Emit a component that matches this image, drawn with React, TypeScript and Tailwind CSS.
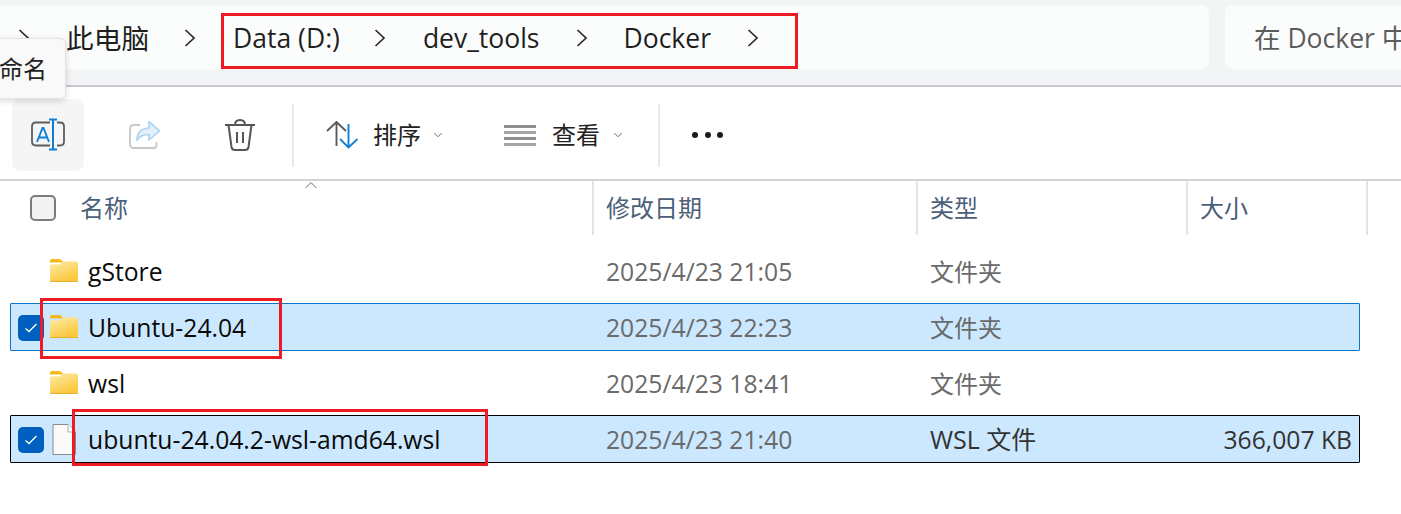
import { ChevronDown, ChevronUp } from 'lucide-react';

const font = { sans: 'font-["Open_Sans","Noto_Sans_CJK_SC",sans-serif]' };

function FolderIcon() {
  return (
    <svg width="28" height="23" viewBox="0 0 28 23" className="shrink-0">
      <defs>
        <linearGradient id="folderBody" x1="0" y1="0" x2="0.5" y2="1">
          <stop offset="0" stopColor="#fdeca8" />
          <stop offset="1" stopColor="#fcc83e" />
        </linearGradient>
      </defs>
      <path d="M0 2q0-2 2-2h7q1.500 0 2.500 1.200L14 3.500h-14z" fill="#f6b81c" />
      <path d="M0 5.500h0.500L10 5.200l3-2.700H26q2 0 2 2V21q0 2-2 2H2q-2 0-2-2z" fill="url(#folderBody)" />
      <path d="M0 22.500h28" stroke="#e8ad2c" strokeWidth="1" />
    </svg>
  );
}

function FileIcon() {
  return (
    <svg width="24" height="31" viewBox="0 0 24 31" className="shrink-0">
      <path d="M1 .5h15l7.500 7.500v22.500H1z" fill="#fafafa" stroke="#8a8a8a" />
      <path d="M16 .5V8h7.500" fill="#fff" stroke="#b0b0b0" />
    </svg>
  );
}

function Checked() {
  return (
    <div className="flex h-[26px] w-[26px] shrink-0 items-center justify-center rounded-[5px] bg-[#0060c0]">
      <svg width="14" height="10" viewBox="0 0 14 10">
        <path d="M1.500 5.500 5 8.500l7.500-7.500" fill="none" stroke="#fff" strokeWidth="1.300" />
      </svg>
    </div>
  );
}

function RenameIcon() {
  return (
    <svg width="34" height="34" viewBox="0 0 34 34">
      <path d="M19 4.500H5q-4 0-4 4v15q0 4 4 4h14M26 4.500h3q4 0 4 4v15q0 4-4 4h-3" fill="none" stroke="#5c5c5c" strokeWidth="1.800" />
      <path d="M6 24 11.500 10h1L18 24M7.800 19.500h8.400" fill="none" stroke="#0f7fd6" strokeWidth="1.900" />
      <path d="M18 1.500h8M22 1.500v30M18 31.500h8" fill="none" stroke="#0f7fd6" strokeWidth="2" />
    </svg>
  );
}

function ShareIcon() {
  return (
    <svg width="32" height="30" viewBox="0 0 32 30">
      <path d="M11 5H5Q1 5 1 9v15q0 4 4 4h20q2.500 0 2.500-3v-3" fill="none" stroke="#c8c8c8" strokeWidth="1.800" />
      <path d="M20 1.500 30.500 11 20 20v-5.500c-6 0-10 2-12 6 0-8 5-12 12-12.500z" fill="#e2f0fb" stroke="#a9d3f3" strokeWidth="1.600" strokeLinejoin="round" />
    </svg>
  );
}

function TrashIcon() {
  return (
    <svg width="30" height="32" viewBox="0 0 30 32">
      <path d="M0 6h30M10 6q0-5 5-5t5 5M3.500 6l3 22q.5 3 3.500 3h10q3 0 3.500-3l3-22M12 13v11M18 13v11" fill="none" stroke="#555" strokeWidth="2" />
    </svg>
  );
}

function SortIcon() {
  return (
    <svg width="33" height="28" viewBox="0 0 33 28">
      <path d="M1 10 10.500 1 20 10M10.500 1v24" fill="none" stroke="#5a5a5a" strokeWidth="1.900" />
      <path d="M22.500 3v23M14 18l8.500 8.500L31.500 18" fill="none" stroke="#0f7fd6" strokeWidth="1.900" />
    </svg>
  );
}

function ViewIcon() {
  return (
    <div className="flex w-[32px] flex-col gap-[3px]">
      <div className="h-[3px] bg-[#8e8e8e]" />
      <div className="h-[3px] bg-[#a5a5a5]" />
      <div className="h-[3px] bg-[#8e8e8e]" />
      <div className="h-[3px] bg-[#a5a5a5]" />
    </div>
  );
}

function Sep({ className }: { className: string }) {
  return (
    <svg width="22" height="22" viewBox="0 0 22 22" className={`mt-[2px] shrink-0 ${className}`}>
      <path d="M6.500 3 15 11l-8.500 8" fill="none" stroke="#2a2a2a" strokeWidth="1.700" />
    </svg>
  );
}

type Row = {
  name: string;
  date: string;
  type: string;
  size?: string;
  file?: boolean;
  state?: 'blue' | 'black';
};

const rows: Row[] = [
  { name: 'gStore', date: '2025/4/23 21:05', type: '文件夹' },
  { name: 'Ubuntu-24.04', date: '2025/4/23 22:23', type: '文件夹', state: 'blue' },
  { name: 'wsl', date: '2025/4/23 18:41', type: '文件夹' },
  { name: 'ubuntu-24.04.2-wsl-amd64.wsl', date: '2025/4/23 21:40', type: 'WSL 文件', size: '366,007 KB', file: true, state: 'black' },
];

function FileRow({ row }: { row: Row }) {
  const look =
    row.state === 'blue'
      ? 'border-[#0f75c8] bg-[#cce8ff]'
      : row.state === 'black'
        ? 'border-black bg-[#cce8ff]'
        : 'border-transparent';
  const sel = !!row.state;
  return (
    <div className={`mb-[8px] flex h-[48px] w-[1350px] items-center rounded-[1px] border pt-[2px] text-[24.7px] ${look}`}>
      <div className="ml-[7px] w-[26px] shrink-0">{sel && <Checked />}</div>
      <div className={`ml-[6px] mr-[10px] flex w-[28px] shrink-0 justify-center ${row.file ? 'mb-[2px]' : 'mb-[4px]'}`}>
        {row.file ? <FileIcon /> : <FolderIcon />}
      </div>
      <div className="w-[518px] shrink-0 whitespace-nowrap text-[#0b0b0b]">{row.name}</div>
      <div className="w-[324px] shrink-0 text-[#6a6a6a]">{row.date}</div>
      <div className={`w-[240px] shrink-0 ${row.file ? 'text-[25px] text-[#333]' : 'text-[24px] text-[#6a6a6a]'}`}>{row.type}</div>
      <div className="w-[182px] shrink-0 text-right text-[#333]">{row.size}</div>
    </div>
  );
}

export default function App() {
  return (
    <div className={`relative h-[514px] w-[1401px] overflow-hidden bg-white ${font.sans}`}>
      {/* address bar */}
      <div className="flex h-[87px] gap-[16px] border-b-2 border-[#c8c9ce] bg-[#f3f4f6] pt-[5px]">
        <div className="flex h-[64px] w-[1209px] shrink-0 items-center rounded-r-[8px] bg-[#fbfdfc] text-[26.500px] leading-none text-[#1f1f1f]">
          <Sep className="ml-[13px]" />
          <span className="ml-[31px] pt-[3px] text-[27.700px]">此电脑</span>
          <Sep className="ml-[30px]" />
          <span className="ml-[32px] pt-[3px]">Data (D:)</span>
          <Sep className="ml-[29px]" />
          <span className="ml-[32px] pt-[3px]">dev_tools</span>
          <Sep className="ml-[31px]" />
          <span className="ml-[31px] pt-[3px]">Docker</span>
          <Sep className="ml-[31px]" />
        </div>
        <div className="flex h-[64px] flex-1 items-center whitespace-nowrap rounded-l-[8px] bg-[#fbfdfc] pl-[29px] pt-[3px] text-[26.500px] leading-none text-[#5c5c5c]">
          在 Docker 中搜索
        </div>
      </div>

      {/* command bar */}
      <div className="flex h-[94px] items-center border-b-2 border-[#d4d4d8] pl-[12px] pt-[4px] text-[#222]">
        <div className="flex h-[72px] w-[72px] shrink-0 items-center justify-center rounded-[8px] bg-[#f5f5f5]">
          <RenameIcon />
        </div>
        <div className="ml-[45px]"><ShareIcon /></div>
        <div className="ml-[64px]"><TrashIcon /></div>
        <div className="ml-[37px] h-[63px] w-[2px] bg-[#e8e8e8]" />
        <div className="ml-[32px]"><SortIcon /></div>
        <span className="ml-[14px] text-[24px]">排序</span>
        <ChevronDown size={14} strokeWidth={1.500} className="ml-[10px] text-[#555]" />
        <div className="ml-[59px]"><ViewIcon /></div>
        <span className="ml-[16px] text-[24px]">查看</span>
        <ChevronDown size={14} strokeWidth={1.500} className="ml-[11px] text-[#555]" />
        <div className="ml-[33px] h-[63px] w-[2px] bg-[#e8e8e8]" />
        <div className="ml-[32px] flex gap-[6.500px]">
          <div className="h-[6px] w-[6px] rounded-full bg-[#1c1c1c]" />
          <div className="h-[6px] w-[6px] rounded-full bg-[#1c1c1c]" />
          <div className="h-[6px] w-[6px] rounded-full bg-[#1c1c1c]" />
        </div>
      </div>

      {/* column headers */}
      <div className="flex h-[54px] items-center text-[24px] text-[#4c607a]">
        <div className="flex h-full w-[594px] items-center border-r-2 border-[#e5e5e8] pl-[30px]">
          <div className="h-[26px] w-[26px] rounded-[5px] border-2 border-[#7c7c7c] bg-[#f3f3f3]" />
          <span className="ml-[24px]">名称</span>
        </div>
        <div className="flex h-full w-[324px] items-center border-r-2 border-[#e5e5e8] pl-[12px]">修改日期</div>
        <div className="flex h-full w-[270px] items-center border-r-2 border-[#e5e5e8] pl-[12px]">类型</div>
        <div className="flex h-full w-[180px] items-center border-r-2 border-[#e5e5e8] pl-[12px]">大小</div>
      </div>

      {/* rows */}
      <div className="ml-[10px] mt-[12px]">
        {rows.map((r) => (
          <FileRow key={r.name} row={r} />
        ))}
      </div>

      {/* sort caret on the header line */}
      <ChevronUp size={20} strokeWidth={1.200} className="absolute left-[301px] top-[175px] text-[#666]" />

      {/* tooltip */}
      <div className="absolute left-[-10px] top-[38px] flex h-[61px] w-[76px] items-center justify-end rounded-[6px] border border-[#e4e4e4] bg-[#f9f9f9] pr-[18px] text-[24px] text-[#222] shadow-[0_2px_6px_rgba(0,0,0,0.15)]">
        <span className="whitespace-nowrap">命名</span>
      </div>

      {/* red annotation boxes */}
      <div className="absolute left-[221px] top-[13px] h-[56px] w-[577px] border-[3px] border-[#ed1c24]" />
      <div className="absolute left-[40px] top-[298px] h-[61px] w-[242px] border-[3px] border-[#ed1c24]" />
      <div className="absolute left-[72px] top-[409px] h-[57px] w-[416px] border-[3px] border-[#ed1c24]" />
    </div>
  );
}
